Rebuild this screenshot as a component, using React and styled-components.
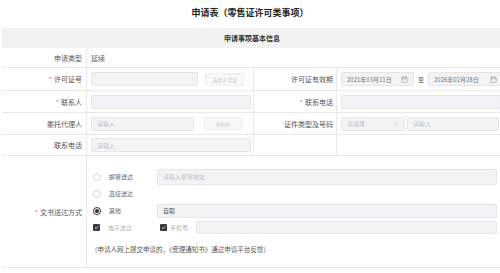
import React from 'react';
import styled, { createGlobalStyle } from 'styled-components';
import { Calendar, ChevronDown } from 'lucide-react';

const GlobalStyle = createGlobalStyle`
  html,
  body {
    margin: 0;
    padding: 0;
    background: #fff;
    overflow: hidden;
  }
  body {
    font-family: "Noto Sans CJK SC", "Noto Sans", sans-serif;
    color: #555;
  }
`;

const Page = styled.div`
  width: 500px;
  height: 273px;
`;

const Title = styled.h1`
  margin: 0;
  height: 28px;
  line-height: 26px;
  text-align: center;
  font-size: 9px;
  font-weight: 700;
  color: #222;
`;

const Form = styled.div`
  margin-left: 2px;
  width: 500px;
`;

const SectionHeader = styled.div`
  height: 20px;
  background: #f2f2f2;
  display: flex;
  align-items: center;
  justify-content: center;
  font-size: 7px;
  font-weight: 700;
  color: #333;
`;

const Grid = styled.div`
  display: grid;
  grid-template-columns: 84px 167px 83px 166px;
  grid-template-rows: 20px 23px 22px 22px 21px 112px;
`;

const Cell = styled.div`
  box-sizing: border-box;
  min-width: 0;
  display: flex;
  align-items: center;
  border-bottom: 1px solid #e9e9e9;
  border-left: ${(p) => (p.$first ? 'none' : '1px solid #e9e9e9')};
  grid-column: span ${(p) => p.$span || 1};
`;

const Label = styled(Cell)`
  justify-content: flex-end;
  padding-right: ${(p) => (p.$first ? '4px' : '3px')};
  font-size: 7px;
  color: #555;
  white-space: nowrap;
  &::before {
    content: ${(p) => (p.$required ? '"*"' : 'none')};
    color: #f56c6c;
    margin-right: 2px;
  }
`;

const Value = styled(Cell)`
  padding: 0 4px;
  gap: ${(p) => p.$gap || 0}px;
  font-size: 7px;
  color: #555;
`;

const Input = styled.div`
  box-sizing: border-box;
  width: ${(p) => (p.$w ? `${p.$w}px` : 'auto')};
  flex: ${(p) => (p.$w ? 'none' : 1)};
  height: ${(p) => p.$h || 14}px;
  padding: 0 5px;
  display: flex;
  align-items: center;
  justify-content: space-between;
  background: #f2f3f5;
  border: 1px solid #e6e6e6;
  border-radius: 2px;
  font-size: 6px;
  color: ${(p) => (p.$filled ? '#555' : '#c4c4c4')};
  white-space: nowrap;
`;

const Btn = styled.div`
  box-sizing: border-box;
  width: ${(p) => p.$w}px;
  height: 13px;
  display: flex;
  align-items: center;
  justify-content: center;
  background: #f8f8f8;
  border: 1px solid #efefef;
  border-radius: 2px;
  font-size: 5px;
  color: #c6c6c6;
`;

const To = styled.span`
  font-size: 6px;
  color: #555;
  margin: 0 1px;
`;

const Delivery = styled(Cell)`
  flex-direction: column;
  align-items: stretch;
  justify-content: flex-start;
  padding: 12px 5px 0 6px;
`;

const Line = styled.div`
  height: 17px;
  display: flex;
  align-items: center;
`;

const Choice = styled.div`
  width: ${(p) => p.$w || 64}px;
  flex: none;
  display: flex;
  align-items: center;
  gap: ${(p) => p.$gap || 8}px;
  font-size: 6px;
  color: ${(p) => (p.$muted ? '#b4b4b4' : '#666')};
`;

const Radio = styled.span`
  box-sizing: border-box;
  width: 8px;
  height: 8px;
  border-radius: 50%;
  border: 1px solid ${(p) => (p.$checked ? '#333' : '#d6d6d6')};
  display: flex;
  align-items: center;
  justify-content: center;
  &::after {
    content: '';
    width: 4px;
    height: 4px;
    border-radius: 50%;
    background: ${(p) => (p.$checked ? '#333' : 'transparent')};
  }
`;

const Check = styled.span`
  width: 7px;
  height: 7px;
  background: #3a3a3a;
  border-radius: 1px;
  display: flex;
  align-items: center;
  justify-content: center;
`;

const Note = styled.div`
  margin: 8px 0 0 -2px;
  font-size: 6.5px;
  color: #555;
`;

function CheckBox() {
  return (
    <Check>
      <svg width="5" height="5" viewBox="0 0 10 10">
        <path d="M2 5.2 L4.2 7.3 L8.2 2.8" fill="none" stroke="#fff" strokeWidth="1.6" />
      </svg>
    </Check>
  );
}

function DateBox({ value, w }) {
  return (
    <Input $w={w} $filled>
      <span style={{ color: '#777' }}>{value}</span>
      <Calendar size={7} color="#999" strokeWidth={2} />
    </Input>
  );
}

export default function App() {
  return (
    <Page>
      <GlobalStyle />
      <Title>申请表（零售证许可类事项）</Title>
      <Form>
        <SectionHeader>申请事项基本信息</SectionHeader>
        <Grid>
          <Label $first>申请类型</Label>
          <Value $span={3}>延续</Value>

          <Label $first $required>许可证号</Label>
          <Value $gap={7}>
            <Input $w={107} />
            <Btn $w={39}>选择许可证</Btn>
          </Value>
          <Label>许可证有效期</Label>
          <Value $gap={3}>
            <DateBox w={73} value="2021年03月11日" />
            <To>至</To>
            <DateBox w={75} value="2026年02月28日" />
          </Value>

          <Label $first $required>联系人</Label>
          <Value>
            <Input $w={160} />
          </Value>
          <Label $required>联系电话</Label>
          <Value>
            <Input $w={160} />
          </Value>

          <Label $first>委托代理人</Label>
          <Value $gap={10}>
            <Input $w={103}>请输入</Input>
            <Btn $w={38}>高拍仪</Btn>
          </Value>
          <Label>证件类型及号码</Label>
          <Value $gap={2}>
            <Input $w={64}>
              请选择
              <ChevronDown size={6} color="#aaa" strokeWidth={2} />
            </Input>
            <Input $w={92}>请输入</Input>
          </Value>

          <Label $first>联系电话</Label>
          <Value>
            <Input $w={160}>请输入</Input>
          </Value>
          <Label />
          <Value />

          <Label $first $required>文书送达方式</Label>
          <Delivery $span={3}>
            <Line>
              <Choice>
                <Radio />
                邮寄送达
              </Choice>
              <Input $h={16}>请输入邮寄地址</Input>
            </Line>
            <Line>
              <Choice>
                <Radio />
                直接送达
              </Choice>
            </Line>
            <Line>
              <Choice>
                <Radio $checked />
                其他
              </Choice>
              <Input $filled>自取</Input>
            </Line>
            <Line>
              <Choice $w={67} $muted>
                <CheckBox />
                电子送达
              </Choice>
              <Choice $w={36} $gap={3} $muted>
                <CheckBox />
                手机号
              </Choice>
              <Input $h={13} />
            </Line>
            <Note>（申请人网上提交申请的，《受理通知书》通过申请平台反馈）</Note>
          </Delivery>
        </Grid>
      </Form>
    </Page>
  );
}
